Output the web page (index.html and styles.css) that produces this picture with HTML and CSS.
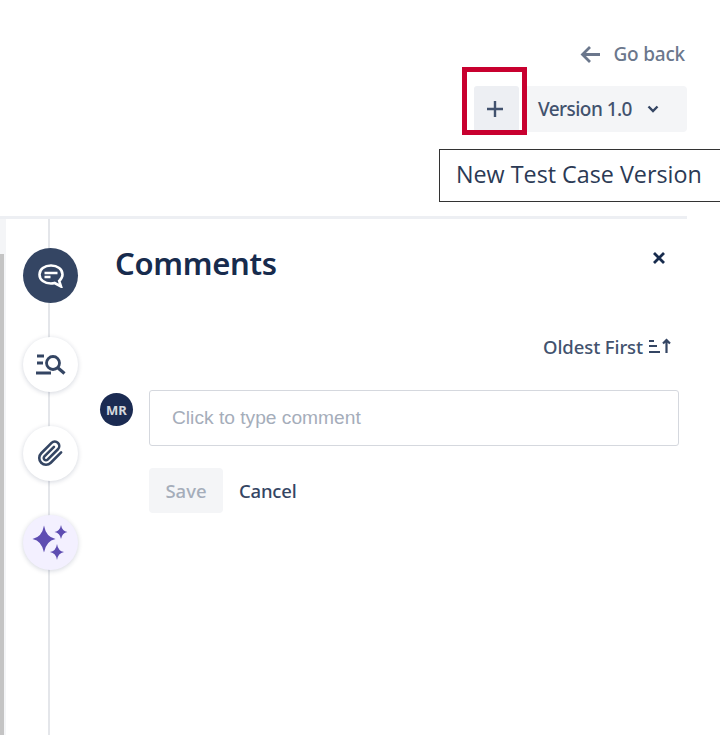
FILE: index.html
```html
<!DOCTYPE html>
<html lang="en">
<head>
<meta charset="utf-8">
<title>Comments</title>
<link rel="stylesheet" href="styles.css">
</head>
<body>
<header class="top">
  <a class="back">
    <svg class="back-icon" viewBox="0 0 20 18"><path d="M20 9H2.500M10 1.500 2.500 9l7.500 7.500" fill="none" stroke="#6b778c" stroke-width="2.800"/></svg>
    <span>Go back</span>
  </a>
  <div class="version-bar">
    <div class="highlight"></div>
    <button class="plus"><svg viewBox="0 0 16 16" class="plus-icon"><path d="M8 0v16M0 8h16" stroke="#42526e" stroke-width="2.400"/></svg></button>
    <div class="version">
      <span>Version 1.0</span>
      <svg class="chev" viewBox="0 0 12 8"><path d="M1.500 1.500 6 6l4.500-4.500" fill="none" stroke="#344563" stroke-width="2.400"/></svg>
    </div>
  </div>
  <div class="tip">New Test Case Version</div>
</header>
<main class="panel">
  <div class="edge"></div>
  <nav class="rail">
    <div class="dot dot-active">
      <svg viewBox="0 0 26 24" class="ic"><path d="M13 1.500C6.500 1.500 1.500 5 1.500 10.500S6.500 19.500 13 19.500c1.300 0 2.500-.2 3.600-.5l6.400 3.500-1.800-5.500c1.600-1.500 3.300-3.800 3.300-6.500C24.500 5 19.500 1.500 13 1.500Z" fill="none" stroke="#fff" stroke-width="2.600"/><path d="M6.500 9h13M6.500 13h6" stroke="#fff" stroke-width="2.400"/></svg>
    </div>
    <div class="dot">
      <svg viewBox="0 0 30 24" class="ic ic-wide"><path d="M1 3h7M1 10h6M0 20h15" stroke="#344563" stroke-width="2.800" fill="none"/><circle cx="17" cy="10" r="6.500" fill="none" stroke="#344563" stroke-width="2.800"/><path d="m21.500 14.500 7 6" stroke="#344563" stroke-width="3.200" fill="none"/></svg>
    </div>
    <div class="dot">
      <svg viewBox="0 0 24 24" class="ic ic-clip"><path d="M21.440 11.050l-9.190 9.190a6 6 0 0 1-8.490-8.490l9.190-9.190a4 4 0 0 1 5.660 5.660l-9.200 9.190a2 2 0 0 1-2.830-2.830l8.490-8.480" fill="none" stroke="#344563" stroke-width="2.300" stroke-linecap="round" stroke-linejoin="round"/></svg>
    </div>
    <div class="dot dot-ai">
      <svg viewBox="0 0 40 40" class="ic ic-spark"><path d="M13 2.500Q15 14 24.500 16 15 18 13 29.500 11 18 1.500 16 11 14 13 2.500ZM30 2Q31 8 36.500 9 31 10 30 16 29 10 23.500 9 29 8 30 2ZM26 21Q27 28 33 29 27 30 26 37 25 30 19 29 25 28 26 21Z" fill="#5e4db2"/></svg>
    </div>
  </nav>
  <section class="content">
    <div class="head">
      <h1>Comments</h1>
      <svg class="close" viewBox="0 0 14 14"><path d="m2 2 10 10M12 2 2 12" stroke="#172b4d" stroke-width="2.800"/></svg>
    </div>
    <div class="sort">
      <span>Oldest First</span>
      <svg class="sort-icon" viewBox="0 0 24 16"><path d="M1 3h5M1 8h8M1 14h11" stroke="#344563" stroke-width="1.800"/><path d="M18.500 15V2M15 5.500l3.500-3.500 3.500 3.500" stroke="#344563" stroke-width="2.200" fill="none"/></svg>
    </div>
    <div class="composer">
      <div class="avatar">MR</div>
      <div class="field">Click to type comment</div>
    </div>
    <div class="actions">
      <button class="save">Save</button>
      <button class="cancel">Cancel</button>
    </div>
  </section>
</main>
</body>
</html>
```
FILE: styles.css
```css
* { box-sizing: border-box; }
html, body { margin: 0; height: 735px; overflow: hidden; background: #fff; }
body { font-family: "Noto Sans", sans-serif; color: #344563; display: flex; flex-direction: column; }

.top { height: 216px; padding: 41px 33px 0 0; display: flex; flex-direction: column; align-items: flex-end; }
.back { display: flex; align-items: center; gap: 13px; height: 26px; color: #6b778c; font-size: 19px; font-weight: 500; letter-spacing: -.2px; padding-right: 2px; }
.back-icon { width: 20px; height: 19px; }
.version-bar { position: relative; margin-top: 19px; height: 46px; width: 213px; display: flex; }
.highlight { position: absolute; left: -12px; top: -19px; width: 65px; height: 68px; border: 5px solid #c8002f; z-index: 1; }
.plus { width: 45px; height: 46px; border: 0; padding: 0 3px 0 0; background: #edeff3; border-radius: 3px; display: flex; align-items: center; justify-content: center; }
.plus-icon { width: 16px; height: 16px; }
.version { flex: 1; margin-left: 8px; background: #f4f5f7; border-radius: 0 4px 4px 0; display: flex; align-items: center; padding-left: 11px; gap: 15px; font-size: 19px; color: #42526e; font-weight: 500; letter-spacing: -.55px; }
.chev { width: 12px; height: 8px; }
.tip { position: absolute; left: 439px; top: 149px; width: 281px; height: 53px; border: 1px solid #333; border-right: 0; background: #fff; padding-left: 16px; font-family: "Open Sans", sans-serif; font-size: 23.300px; line-height: 48px; color: #2b3a55; white-space: nowrap; }

.panel { flex: 1; display: flex; width: 687px; border-top: 3px solid #edeff3; position: relative; }
.edge { width: 6px; flex: none; background: linear-gradient(#f4f5f7 35px, #c4c4c4 35px); border-right: 2px solid #f4f5f7; }
.rail { width: 87px; flex: none; padding: 29px 0 0 17px; display: flex; flex-direction: column; gap: 34px; background: linear-gradient(#e4e6ea, #e4e6ea) 42px 0 / 2px 100% no-repeat; position: relative; }
.dot { width: 55px; height: 55px; border-radius: 50%; background: #fff; display: flex; align-items: center; justify-content: center; box-shadow: 0 1px 5px rgba(9, 30, 66, .18); }
.dot-active { background: #344563; box-shadow: none; }
.dot-ai { background: #f3f0ff; }
.ic { width: 26px; height: 24px; }
.ic-wide { width: 30px; height: 24px; }
.ic-clip { width: 27px; height: 27px; }
.ic-spark { width: 40px; height: 40px; }

.content { flex: 1; padding: 0 8px 0 7px; min-width: 0; }
.head { display: flex; justify-content: space-between; align-items: flex-start; padding: 22px 0 0 15px; height: 108px; }
h1 { margin: 0; font-size: 31px; line-height: 44px; font-weight: 600; color: #172b4d; letter-spacing: -.3px; }
.close { width: 14px; height: 14px; margin: 10px 13px 0 0; }
.sort { height: 36px; padding-top: 2px; display: flex; justify-content: flex-end; align-items: center; gap: 5px; font-size: 18.500px; font-weight: 500; color: #42526e; letter-spacing: -.1px; }
.sort-icon { width: 24px; height: 16px; margin-right: 7px; }
.composer { display: flex; gap: 16px; margin-top: 27px; }
.avatar { width: 33px; height: 33px; margin-top: 3px; border-radius: 50%; background: #1b2b52; color: #d5d8de; font-size: 13px; font-weight: 700; display: flex; align-items: center; justify-content: center; flex: none; }
.field { flex: 1; height: 56px; border: 1px solid #d5d8de; border-radius: 3px; padding-left: 22px; font-family: "Liberation Sans", sans-serif; font-size: 19.200px; line-height: 54px; color: #a5adba; }
.actions { display: flex; align-items: center; gap: 16px; margin: 22px 0 0 49px; }
.save { width: 74px; height: 45px; border: 0; border-radius: 4px; background: #f4f5f7; color: #a5adba; font: 500 18.500px "Noto Sans", sans-serif; }
.cancel { border: 0; padding: 0; background: none; color: #344563; font: 500 18.500px "Noto Sans", sans-serif; letter-spacing: -.2px; }
```
